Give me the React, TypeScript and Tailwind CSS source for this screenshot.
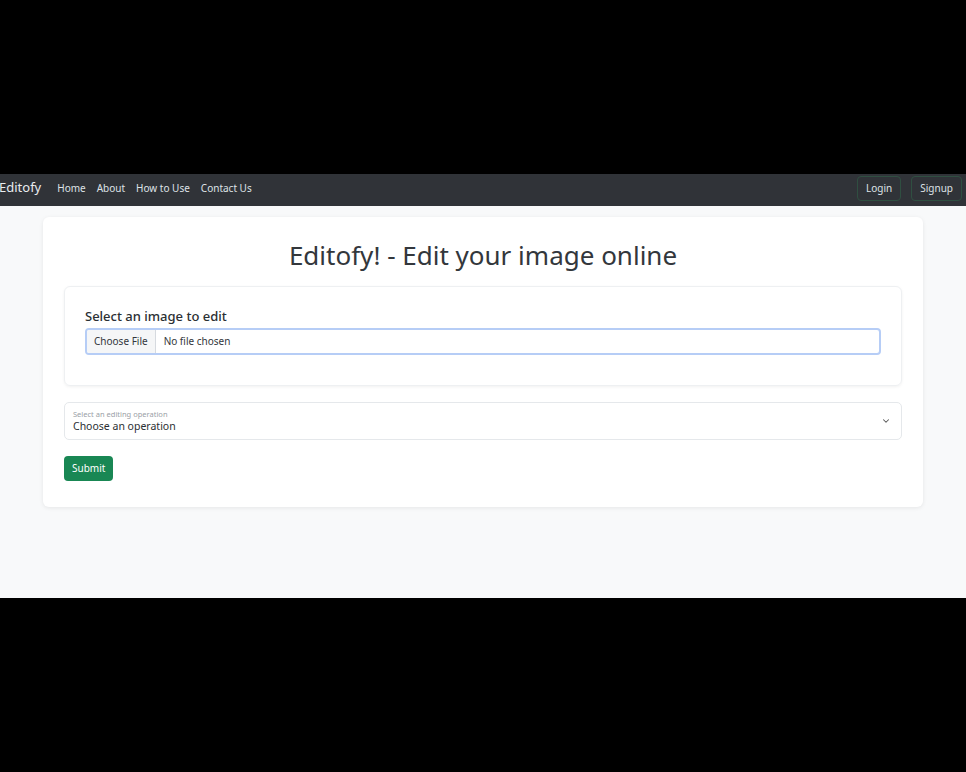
import { ChevronDown } from 'lucide-react'

const links = ['Home', 'About', 'How to Use', 'Contact Us']

export default function App() {
  return (
    <div
      className="min-h-[772px] bg-black flex items-center"
      style={{ fontFamily: '"Noto Sans", "Open Sans", sans-serif' }}
    >
      <div className="w-full h-[424px] bg-[#f8f9fa] flex flex-col">
        <nav className="h-[32px] bg-[#303338] flex items-center pr-[4px] pb-[4px]">
          <span className="text-[13px] text-[#e9ecef] mr-[16px] -ml-[1px]">Editofy</span>
          <ul className="flex items-center gap-[11px] text-[10px] text-[#dee2e6]">
            {links.map((l) => (
              <li key={l}>{l}</li>
            ))}
          </ul>
          <div className="ml-auto flex gap-[10px]">
            <button className="h-[25px] px-[8px] text-[10px] text-[#dee2e6] border border-[#2f4f41] rounded-[4px]">
              Login
            </button>
            <button className="h-[25px] px-[8px] text-[10px] text-[#dee2e6] border border-[#2f4f41] rounded-[4px]">
              Signup
            </button>
          </div>
        </nav>

        <main className="px-[43px] pt-[11px]">
          <div className="bg-white rounded-[6px] shadow-[0_1px_4px_rgba(0,0,0,0.08)] px-[21px] pt-[19px] pb-[26px]">
            <h1 className="text-center text-[26px] text-[#33373c] leading-[38px] mb-[12px]">
              Editofy! - Edit your image online
            </h1>

            <div className="border border-[#eef0f2] rounded-[6px] shadow-[0_1px_3px_rgba(0,0,0,0.06)] pl-[20px] pr-[20px] pt-[20px] pb-[30px]">
              <label className="block text-[13px] font-medium text-[#2b2f33] leading-[18px] mb-[3px]">
                Select an image to edit
              </label>
              <div className="flex items-stretch h-[27px] border-2 border-[#b6cdf6] rounded-[4px] overflow-hidden text-[10px] text-[#33373c]">
                <span className="bg-[#f5f6f7] border-r border-[#d6dadf] px-[7px] flex items-center">Choose File</span>
                <span className="px-[8px] flex items-center">No file chosen</span>
              </div>
            </div>

            <div className="mt-[16px] h-[38px] border border-[#e5e8eb] rounded-[5px] flex items-center pl-[8px] pr-[10px]">
              <div className="flex-1 flex flex-col">
                <span className="text-[7.5px] text-[#9aa0a6] leading-[10px]">Select an editing operation</span>
                <span className="text-[10.5px] text-[#2b2f33] leading-[15px]">Choose an operation</span>
              </div>
              <ChevronDown className="w-[10px] h-[10px] text-[#555]" strokeWidth={2.5} />
            </div>

            <button className="mt-[16px] h-[25px] px-[8px] bg-[#198754] text-white text-[10px] rounded-[4px]">
              Submit
            </button>
          </div>
        </main>
      </div>
    </div>
  )
}
